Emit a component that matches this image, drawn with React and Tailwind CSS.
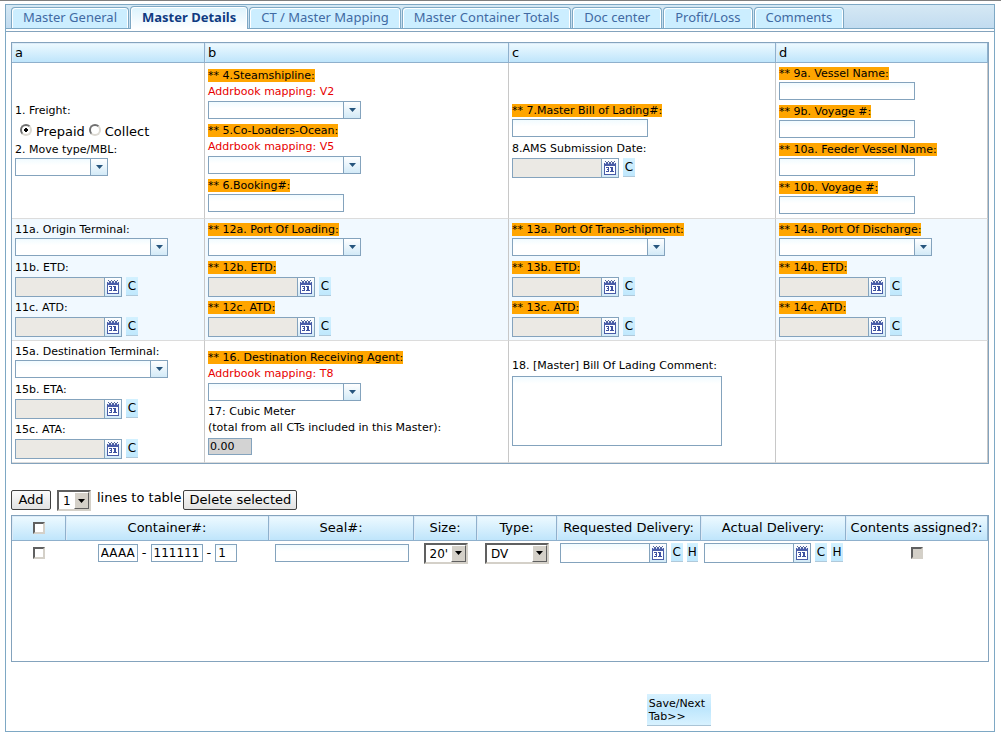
import React, { useState } from 'react';

const tabs = [
  'Master General',
  'Master Details',
  'CT / Master Mapping',
  'Master Container Totals',
  'Doc center',
  'Profit/Loss',
  'Comments'
];

const inputClass =
  'h-[18px] border border-[#84a3bd] bg-linear-to-b from-[#f1fbff] to-white to-40% px-[2px] text-black focus:outline-none';

const CalendarIcon = () => (
  <svg width="12" height="14" viewBox="0 0 12 14" shapeRendering="crispEdges">
    <rect x="0" y="2" width="12" height="12" fill="#4a5da8" />
    <rect x="1" y="5" width="10" height="8" fill="#fff" />
    <path d="M1 0h1v1h-1zM4 0h1v1h-1zM7 0h1v1h-1zM10 0h1v1h-1zM2 1h2v1h-2zM5 1h2v1h-2zM8 1h2v1h-2z" fill="#56669c" />
    <path d="M1 2h1v1h-1zM4 2h1v1h-1zM7 2h1v1h-1zM10 2h1v1h-1z" fill="#c6d0ea" />
    <path d="M2 6h3v5h-3v-1h2v-1h-1v-1h1v-1h-2zM7 6h2v4h1v1h-4v-1h1v-3h-1v-1z" fill="#3d51a0" />
  </svg>
);

const Label = ({ htmlFor, required, children }) => (
  <label htmlFor={htmlFor} className="block pt-px text-[11px] leading-4">
    <span className={required ? 'bg-[#ffa500]' : ''}>{required ? `** ${children}` : children}</span>
  </label>
);

const Mapping = ({ children }) => <p className="text-[11px] leading-4 text-[#e80000]">{children}</p>;

const TextField = ({ id, label, required }) => (
  <div className="pb-[3px]">
    <Label htmlFor={id} required={required}>{label}</Label>
    <input id={id} type="text" className={`${inputClass} block w-[136px] text-[11px]`} />
  </div>
);

const ComboField = ({ id, label, required, mapping, small }) => (
  <div className="pb-[3px]">
    <Label htmlFor={id} required={required}>{label}</Label>
    {mapping && <Mapping>{mapping}</Mapping>}
    <div className={`relative ${mapping ? 'mt-px' : ''} ${small ? 'w-[93px]' : 'w-[153px]'}`}>
      <select id={id} className={`${inputClass} block w-full appearance-none text-[11px]`}>
        <option></option>
      </select>
      <span className="pointer-events-none absolute inset-y-0 right-0 flex w-[18px] items-center justify-center border border-[#84a3bd] bg-linear-to-b from-white to-[#d3eaf7]">
        <svg width="7" height="4" viewBox="0 0 7 4">
          <path d="M0 0h7L3.500 4z" fill="#27557d" />
        </svg>
      </span>
    </div>
  </div>
);

const MiniButton = ({ title, children }) => (
  <button
    type="button"
    title={title}
    className="h-[19px] w-3 border-b border-[#b0c9da] bg-linear-to-b from-[#d3f1ff] to-[#c0e8fd] text-center text-[12px] leading-4"
  >
    {children}
  </button>
);

const DateInput = ({ id, label, disabled, hold }) => (
  <div className="flex gap-1">
    <div className="flex h-5">
      <input
        id={id}
        type="text"
        aria-label={label}
        readOnly={disabled}
        className={`h-5 w-[90px] border border-[#84a3bd] px-[2px] text-[11px] focus:outline-none ${
          disabled ? 'bg-[#ebe9e4]' : 'bg-linear-to-b from-[#f1fbff] to-white to-40%'
        }`}
      />
      <button
        type="button"
        aria-label="Open calendar"
        className="flex h-5 w-[17px] items-center justify-center border border-l-0 border-[#84a3bd] bg-linear-to-b from-white to-[#d3eaf7]"
      >
        <CalendarIcon />
      </button>
    </div>
    <MiniButton title="Clear">C</MiniButton>
    {hold && <MiniButton title="Hold">H</MiniButton>}
  </div>
);

const DateField = ({ id, label, required }) => (
  <div className="pb-[2px]">
    <Label htmlFor={id} required={required}>{label}</Label>
    <div className="mt-px">
      <DateInput id={id} disabled />
    </div>
  </div>
);

const Radio = ({ label, ...props }) => (
  <label className="flex items-center gap-1 text-[13px]">
    <input
      type="radio"
      className="mb-1 h-3 w-3 appearance-none rounded-full border-2 border-t-[#707070] border-r-[#dcd9d2] border-b-[#dcd9d2] border-l-[#707070] bg-white checked:bg-[radial-gradient(circle,#000_2px,#fff_2px)]"
      {...props}
    />
    {label}
  </label>
);

const Checkbox = (props) => (
  <input
    type="checkbox"
    className="block h-3 w-3 appearance-none border-2 border-t-[#606060] border-r-[#d4d0c8] border-b-[#d4d0c8] border-l-[#606060] bg-white checked:bg-[#404040] disabled:bg-[#d4d0c8]"
    {...props}
  />
);

const ClassicSelect = ({ options, className, ...props }) => (
  <div className={`relative inline-block h-[21px] align-top ${className}`}>
    <select
      className="h-full w-full appearance-none border-2 border-t-[#606060] border-r-[#d4d0c8] border-b-[#d4d0c8] border-l-[#606060] bg-white pl-1 text-[12px] focus:outline-none"
      {...props}
    >
      {options.map((option) => (
        <option key={option}>{option}</option>
      ))}
    </select>
    <span className="pointer-events-none absolute top-[2px] right-[2px] bottom-[2px] flex w-[15px] items-center justify-center border border-t-white border-r-[#606060] border-b-[#606060] border-l-white bg-[#d4d0c8]">
      <svg width="7" height="4" viewBox="0 0 7 4">
        <path d="M0 0h7L3.500 4z" fill="#000" />
      </svg>
    </span>
  </div>
);

const gridHead =
  'border-r border-b border-[#8fb0cc] bg-linear-to-b from-[#eefaff] to-[#bfe5fb] px-[3px] font-normal shadow-[inset_1px_1px_0_#dcebf8]';
const gridCell = 'border-r border-b border-r-[#c8c8c8] border-b-[#dcdcdc] px-[3px] align-middle';
const toolButton =
  'h-5 rounded-[2px] border border-[#404040] bg-linear-to-b from-[#fbfbfb] to-[#e2e2e2] text-[13px] leading-4';

const DetailsGrid = () => {
  const [freight, setFreight] = useState('prepaid');

  return (
    <table className="w-full table-fixed border-separate border-spacing-0 border border-[#84a3bd] text-left">
      <colgroup>
        <col className="w-[193px]" />
        <col className="w-[304px]" />
        <col className="w-[267px]" />
        <col />
      </colgroup>
      <thead>
        <tr className="h-5 text-[13px] leading-4">
          {['a', 'b', 'c', 'd'].map((column) => (
            <th key={column} className={gridHead}>{column}</th>
          ))}
        </tr>
      </thead>
      <tbody>
        <tr className="h-[156px]">
          <td className={gridCell}>
            <fieldset>
              <legend className="text-[11px] leading-4">1. Freight:</legend>
              <div className="flex h-[22px] items-center gap-1 pt-1 pl-[5px]">
                <Radio label="Prepaid" name="freight" checked={freight === 'prepaid'} onChange={() => setFreight('prepaid')} />
                <Radio label="Collect" name="freight" checked={freight === 'collect'} onChange={() => setFreight('collect')} />
              </div>
            </fieldset>
            <ComboField id="moveType" label="2. Move type/MBL:" small />
          </td>
          <td className={gridCell}>
            <ComboField id="steamship" label="4.Steamshipline:" required mapping="Addrbook mapping: V2" />
            <ComboField id="coLoaders" label="5.Co-Loaders-Ocean:" required mapping="Addrbook mapping: V5" />
            <TextField id="booking" label="6.Booking#:" required />
          </td>
          <td className={gridCell}>
            <TextField id="mbl" label="7.Master Bill of Lading#:" required />
            <DateField id="ams" label="8.AMS Submission Date:" />
          </td>
          <td className={gridCell}>
            <TextField id="vessel" label="9a. Vessel Name:" required />
            <TextField id="voyage" label="9b. Voyage #:" required />
            <TextField id="feederVessel" label="10a. Feeder Vessel Name:" required />
            <TextField id="feederVoyage" label="10b. Voyage #:" required />
          </td>
        </tr>
        <tr className="h-[122px] bg-[#f1f9ff]">
          <td className={gridCell}>
            <ComboField id="origin" label="11a. Origin Terminal:" />
            <DateField id="originEtd" label="11b. ETD:" />
            <DateField id="originAtd" label="11c. ATD:" />
          </td>
          <td className={gridCell}>
            <ComboField id="loading" label="12a. Port Of Loading:" required />
            <DateField id="loadingEtd" label="12b. ETD:" required />
            <DateField id="loadingAtd" label="12c. ATD:" required />
          </td>
          <td className={gridCell}>
            <ComboField id="tranship" label="13a. Port Of Trans-shipment:" required />
            <DateField id="transhipEtd" label="13b. ETD:" required />
            <DateField id="transhipAtd" label="13c. ATD:" required />
          </td>
          <td className={gridCell}>
            <ComboField id="discharge" label="14a. Port Of Discharge:" required />
            <DateField id="dischargeEtd" label="14b. ETD:" required />
            <DateField id="dischargeAtd" label="14c. ATD:" required />
          </td>
        </tr>
        <tr className="h-[122px]">
          <td className={gridCell}>
            <ComboField id="destination" label="15a. Destination Terminal:" />
            <DateField id="destinationEta" label="15b. ETA:" />
            <DateField id="destinationAta" label="15c. ATA:" />
          </td>
          <td className={gridCell}>
            <ComboField id="agent" label="16. Destination Receiving Agent:" required mapping="Addrbook mapping: T8" />
            <label htmlFor="cubic" className="block text-[11px] leading-4">
              17: Cubic Meter
              <br />
              (total from all CTs included in this Master):
            </label>
            <input
              id="cubic"
              type="text"
              readOnly
              defaultValue="0.00"
              className="mt-[2px] block h-[17px] w-11 border border-[#84a3bd] bg-[#d3d3d3] px-[1px] text-[11px] focus:outline-none"
            />
          </td>
          <td className={gridCell}>
            <Label htmlFor="comment">18. [Master] Bill Of Lading Comment:</Label>
            <textarea
              id="comment"
              className="mt-[2px] mb-px block h-[70px] w-[210px] resize-none border border-[#84a3bd] bg-linear-to-b from-[#f1fbff] to-white to-10% text-[11px] focus:outline-none"
            />
          </td>
          <td className={gridCell}></td>
        </tr>
      </tbody>
    </table>
  );
};

const ContainerTable = () => (
  <div className="min-h-[147px] border border-[#84a3bd]">
    <table className="w-full table-fixed border-separate border-spacing-0 text-[13px]">
      <colgroup>
        <col className="w-[54px]" />
        <col className="w-[203px]" />
        <col className="w-[145px]" />
        <col className="w-[63px]" />
        <col className="w-[80px]" />
        <col className="w-[144px]" />
        <col className="w-[145px]" />
        <col />
      </colgroup>
      <thead>
        <tr className="h-[25px] whitespace-nowrap">
          <th className={gridHead}>
            <div className="flex justify-center">
              <Checkbox aria-label="Select all" />
            </div>
          </th>
          {['Container#:', 'Seal#:', 'Size:', 'Type:', 'Requested Delivery:', 'Actual Delivery:', 'Contents assigned?:'].map((title) => (
            <th key={title} className={gridHead}>{title}</th>
          ))}
        </tr>
      </thead>
      <tbody>
        <tr className="h-6 text-center">
          <td>
            <div className="flex justify-center">
              <Checkbox aria-label="Select row" />
            </div>
          </td>
          <td>
            <div className="flex items-center justify-center gap-1">
              <input aria-label="Container prefix" defaultValue="AAAA" className={`${inputClass} w-10 text-[12px]`} />
              -
              <input aria-label="Container number" defaultValue="111111" className={`${inputClass} w-[52px] text-[12px]`} />
              -
              <input aria-label="Check digit" defaultValue="1" className={`${inputClass} w-[22px] text-[12px]`} />
            </div>
          </td>
          <td>
            <input aria-label="Seal number" className={`${inputClass} mx-auto block w-[134px] text-[12px]`} />
          </td>
          <td>
            <ClassicSelect aria-label="Size" options={["20'", "40'", "45'"]} className="w-11" />
          </td>
          <td>
            <ClassicSelect aria-label="Type" options={['DV', 'HC', 'RF']} className="w-16" />
          </td>
          <td className="px-[3px]">
            <DateInput label="Requested delivery" hold />
          </td>
          <td className="px-[3px]">
            <DateInput label="Actual delivery" hold />
          </td>
          <td>
            <div className="flex justify-center">
              <Checkbox aria-label="Contents assigned" disabled />
            </div>
          </td>
        </tr>
      </tbody>
    </table>
  </div>
);

export default function App() {
  const [activeTab, setActiveTab] = useState('Master Details');

  return (
    <div className="border-t border-[#808080] bg-white pr-[6px] pb-[5px] pl-[5px] font-['DejaVu_Sans',Verdana,sans-serif] text-black">
      <div className="mt-[3px] border border-[#7ea8c4]">
        {/* Tab bar */}
        <div
          role="tablist"
          className="flex h-6 items-end gap-px border-b border-[#7ea8c4] bg-linear-to-b from-[#d5e8f4] to-[#c2dcf0] pl-[5px] font-['Noto_Sans',Tahoma,sans-serif] text-[13px] whitespace-nowrap"
        >
          {tabs.map((tab) => (
            <button
              key={tab}
              type="button"
              role="tab"
              aria-selected={tab === activeTab}
              onClick={() => setActiveTab(tab)}
              className={`rounded-t-[4px] border border-b-0 border-[#7ea8c4] px-[11px] shadow-[inset_1px_1px_0_#fff,inset_-1px_0_0_#fff] ${
                tab === activeTab
                  ? '-mb-px h-[23px] bg-linear-to-b from-[#dcf3fd] to-white font-bold text-[#0f3b82]'
                  : 'h-[21px] bg-[#cceeff] text-[#416aa3]'
              }`}
            >
              {tab}
            </button>
          ))}
        </div>

        <div className="mt-[2px] border-t border-[#84a3bd] px-[5px] pt-[10px] pb-[5px]">
          <DetailsGrid />

          {/* Line actions */}
          <div className="mt-[26px] mb-1 flex text-[13px]">
            <button type="button" className={`${toolButton} w-10`}>Add</button>
            <ClassicSelect aria-label="Number of lines" options={['1', '2', '3', '4', '5']} className="ml-[6px] w-[34px]" />
            <span className="ml-[6px] leading-4">lines to table</span>
            <button type="button" className={`${toolButton} ml-[2px] w-[114px]`}>Delete selected</button>
          </div>

          <ContainerTable />

          <button
            type="button"
            className="mt-8 ml-[65%] block h-8 w-16 border-b border-[#a9c4d6] bg-linear-to-b from-[#d8f2ff] via-[#bfe7fd] to-[#d8f2ff] pl-[2px] text-left text-[11px] leading-[13px]"
          >
            Save/Next Tab&gt;&gt;
          </button>
        </div>
      </div>
    </div>
  );
}
